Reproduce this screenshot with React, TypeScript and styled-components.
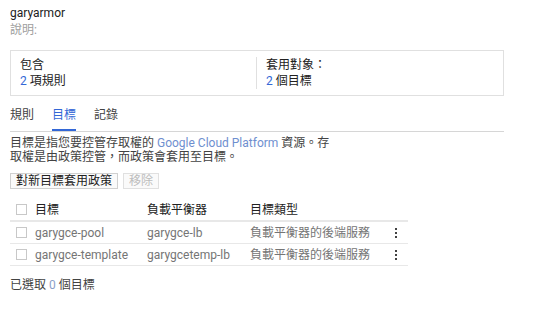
import React from 'react';
import styled, { createGlobalStyle } from 'styled-components';

const GlobalStyle = createGlobalStyle`
  body {
    margin: 0;
    background: #fff;
    font-family: Roboto, "Noto Sans CJK TC", sans-serif;
    font-size: 12px;
    line-height: 14px;
    color: #212121;
  }
`;

const Page = styled.div`
  padding: 5px 10px 0 10px;
  width: 494px;
`;

const Title = styled.div`
  font-size: 12px;
  line-height: 17px;
`;

const Subtle = styled.div`
  color: #9e9e9e;
  line-height: 17px;
`;

const SummaryBox = styled.div`
  margin-top: 11px;
  border: 1px solid #e0e0e0;
  display: grid;
  grid-template-columns: 1fr 1fr;
  padding: 6px 0;
`;

const SummaryCell = styled.div<{ $divider?: boolean }>`
  padding: 0 9px;
  line-height: 16px;
  border-left: ${(p) => (p.$divider ? '1px solid #e0e0e0' : 'none')};
  margin-left: ${(p) => (p.$divider ? '-1px' : '0')};
`;

const Num = styled.span`
  color: #3367d6;
`;

const Tabs = styled.div`
  margin-top: 11px;
  display: flex;
  border-bottom: 1px solid #d6d6d6;
`;

const Tab = styled.div<{ $active?: boolean }>`
  font-size: 12px;
  line-height: 16px;
  padding: 0 0 6px 0;
  margin-right: 18px;
  color: ${(p) => (p.$active ? '#3367d6' : '#424242')};
  border-bottom: 2px solid ${(p) => (p.$active ? '#3367d6' : 'transparent')};
`;

const Description = styled.p`
  margin: 4px 0 0 0;
  width: 326px;
  line-height: 14px;
  color: #424242;
`;

const Link = styled.span`
  color: #6f8fcf;
`;

const Actions = styled.div`
  margin-top: 9px;
  display: flex;
  gap: 5px;
`;

const Button = styled.button`
  font-family: inherit;
  font-size: 12px;
  line-height: 14px;
  padding: 0 5px;
  height: 16px;
  background: #fafafa;
  border: 1px solid #d0d0d0;
  border-radius: 0;
  color: #212121;
  &:disabled {
    color: #bdbdbd;
    background: #fafafa;
    border-color: #e0e0e0;
  }
`;

const Table = styled.div`
  margin-top: 10px;
  width: 398px;
`;

const Row = styled.div<{ $head?: boolean }>`
  display: grid;
  grid-template-columns: 25px 112px 103px 141px 17px;
  align-items: center;
  height: 21px;
  border-bottom: ${(p) => (p.$head ? '2px' : '1px')} solid #e8e8e8;
  color: ${(p) => (p.$head ? '#212121' : '#757575')};
`;

const Box = styled.span`
  display: inline-block;
  width: 9px;
  height: 9px;
  border: 1px solid #c8c8c8;
  margin-left: 6px;
`;

const Kebab = styled.svg`
  display: block;
  margin-left: 3px;
`;

const Footer = styled.div`
  margin-top: 12px;
  color: #424242;
`;

const FooterNum = styled.span`
  color: #8aa0c8;
`;

const rows = [
  { name: 'garygce-pool', lb: 'garygce-lb', type: '負載平衡器的後端服務' },
  { name: 'garygce-template', lb: 'garygcetemp-lb', type: '負載平衡器的後端服務' },
];

const App = () => {
  return (
    <Page>
      <GlobalStyle />
      <Title>garyarmor</Title>
      <Subtle>說明:</Subtle>
      <SummaryBox>
        <SummaryCell>
          <div>包含</div>
          <div>
            <Num>2</Num> 項規則
          </div>
        </SummaryCell>
        <SummaryCell $divider>
          <div>套用對象：</div>
          <div>
            <Num>2</Num> 個目標
          </div>
        </SummaryCell>
      </SummaryBox>
      <Tabs>
        <Tab>規則</Tab>
        <Tab $active>目標</Tab>
        <Tab>記錄</Tab>
      </Tabs>
      <Description>
        目標是指您要控管存取權的 <Link>Google Cloud Platform</Link> 資源。存取權是由政策控管，而政策會套用至目標。
      </Description>
      <Actions>
        <Button>對新目標套用政策</Button>
        <Button disabled>移除</Button>
      </Actions>
      <Table>
        <Row $head>
          <Box />
          <span>目標</span>
          <span>負載平衡器</span>
          <span>目標類型</span>
          <span />
        </Row>
        {rows.map((r) => (
          <Row key={r.name}>
            <Box />
            <span>{r.name}</span>
            <span>{r.lb}</span>
            <span>{r.type}</span>
            <Kebab width="4" height="12" viewBox="0 0 4 12">
              <rect x="1" y="1" width="2" height="2" fill="#424242" />
              <rect x="1" y="5" width="2" height="2" fill="#424242" />
              <rect x="1" y="9" width="2" height="2" fill="#424242" />
            </Kebab>
          </Row>
        ))}
      </Table>
      <Footer>
        已選取 <FooterNum>0</FooterNum> 個目標
      </Footer>
    </Page>
  );
};

export default App;
